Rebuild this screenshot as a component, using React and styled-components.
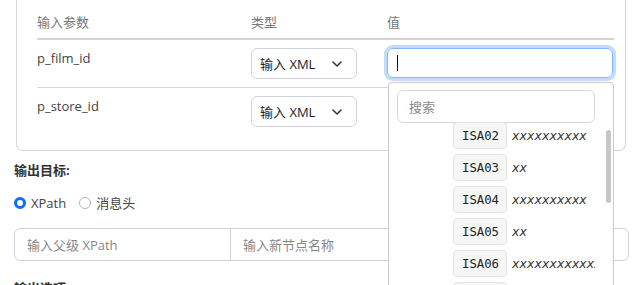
import React from "react";
import styled, { createGlobalStyle } from "styled-components";

const Global = createGlobalStyle`
  html, body { margin: 0; padding: 0; background: #fff; overflow: hidden; }
  body {
    font-family: "Open Sans", "Noto Sans CJK SC", sans-serif;
    font-size: 13px;
    color: #444;
  }
  * { box-sizing: border-box; }
`;

const Page = styled.div`
  width: 629px;
  padding-left: 14px;
`;

const Card = styled.div`
  margin: 0 3px 0 2px;
  border: 1px solid #d6d6d6;
  border-top: none;
  border-radius: 0 0 7px 7px;
  padding: 0 11px 15px 20px;
`;

const Table = styled.div`
  display: grid;
  grid-template-columns: 214px 136px 227px;
`;

const HeadCell = styled.div`
  padding: 12px 0 6px;
  line-height: 20px;
  color: #777;
  border-bottom: 2px solid #d4d4d4;
`;

const Cell = styled.div`
  position: relative;
  padding: 8px 0;
  line-height: 20px;
  color: #444;
  border-bottom: ${(p) => (p.$last ? "none" : "1px solid #d9d9d9")};
`;

const Select = styled.div`
  width: 106px;
  height: 31px;
  border: 1px solid #cfd4da;
  border-radius: 6px;
  display: flex;
  align-items: center;
  justify-content: space-between;
  padding: 0 14px 0 8px;
  color: #222;
`;

const ValueBox = styled.div`
  width: 226px;
  height: 30px;
  border: 1px solid #86b7fe;
  border-radius: 6px;
  box-shadow: 0 0 0 3px rgba(13, 110, 253, 0.25);
  display: flex;
  align-items: center;
  padding-left: 9px;
`;

const Caret = styled.span`
  width: 1px;
  height: 16px;
  background: #111;
`;

const Dropdown = styled.div`
  position: absolute;
  z-index: 5;
  top: 42px;
  left: 1px;
  width: 226px;
  height: 230px;
  background: #fff;
  border: 1px solid #cbcbcb;
  border-radius: 4px;
  padding: 7px 18px 0 8px;
  overflow: hidden;
`;

const Search = styled.div`
  height: 33px;
  border: 1px solid #d3d7dd;
  border-radius: 6px;
  display: flex;
  align-items: center;
  padding-left: 11px;
  color: #8a8a8a;
`;

const List = styled.div`
  display: flex;
  flex-direction: column;
  gap: 5px;
  padding-left: 56px;
  margin-top: -1px;
`;

const Item = styled.div`
  display: flex;
  align-items: center;
  gap: 5px;
  height: 27px;
  white-space: nowrap;
`;

const Code = styled.span`
  height: 27px;
  display: flex;
  align-items: center;
  padding: 0 7px 0 8px;
  background: #f6f6f6;
  border: 1px solid #e3e3e3;
  border-radius: 4px;
  font-family: "DejaVu Sans Mono", monospace;
  font-size: 12.3px;
  color: #222;
`;

const Desc = styled.em`
  display: inline-block;
  max-width: 92px;
  overflow: hidden;
  font-family: "DejaVu Sans Mono", monospace;
  font-style: italic;
  font-size: 12.6px;
  color: #333;
  letter-spacing: -0.1px;
`;

const Scroll = styled.div`
  position: absolute;
  right: 2px;
  top: 47px;
  width: 5px;
  height: 73px;
  border-radius: 3px;
  background: #c6c6c6;
`;

const Title = styled.div`
  margin-top: ${(p) => p.$mt}px;
  line-height: 20px;
  font-weight: 700;
  color: #333;
`;

const RadioRow = styled.div`
  margin-top: 13px;
  display: flex;
  align-items: center;
  line-height: 20px;
  gap: 13px;
`;

const RadioLabel = styled.label`
  display: flex;
  align-items: center;
  gap: 5px;
  color: #444;
`;

const Dot = styled.span`
  width: 12px;
  height: 12px;
  border-radius: 50%;
  border: ${(p) => (p.$on ? "3.5px solid #0d6efd" : "1px solid #b5b5b5")};
  background: #fff;
`;

const Group = styled.div`
  margin-top: 15px;
  display: flex;
  height: 33px;
  border: 1px solid #cfd4da;
  border-radius: 6px;
`;

const GroupInput = styled.div`
  width: ${(p) => p.$w};
  flex: ${(p) => (p.$grow ? 1 : "none")};
  display: flex;
  align-items: center;
  padding-left: 12px;
  color: #888;
  border-left: ${(p) => (p.$sep ? "1px solid #cfd4da" : "none")};
`;

const Chevron = () => (
  <svg width="10" height="6" viewBox="0 0 10 6">
    <path d="M1 1l4 4 4-4" fill="none" stroke="#333" strokeWidth="1.5" strokeLinecap="round" strokeLinejoin="round" />
  </svg>
);

const items = [
  ["ISA02", "xxxxxxxxxx"],
  ["ISA03", "xx"],
  ["ISA04", "xxxxxxxxxx"],
  ["ISA05", "xx"],
  ["ISA06", "xxxxxxxxxxxxx."],
  ["ISA07", "xx"],
];

export default function App() {
  return (
    <Page>
      <Global />
      <Card>
        <Table>
          <HeadCell>输入参数</HeadCell>
          <HeadCell>类型</HeadCell>
          <HeadCell>值</HeadCell>

          <Cell>p_film_id</Cell>
          <Cell>
            <Select>
              <span>输入 XML</span>
              <Chevron />
            </Select>
          </Cell>
          <Cell>
            <ValueBox>
              <Caret />
            </ValueBox>
            <Dropdown>
              <Search>搜索</Search>
              <List>
                {items.map(([c, d]) => (
                  <Item key={c}>
                    <Code>{c}</Code>
                    <Desc>{d}</Desc>
                  </Item>
                ))}
              </List>
              <Scroll />
            </Dropdown>
          </Cell>

          <Cell $last>p_store_id</Cell>
          <Cell $last>
            <Select>
              <span>输入 XML</span>
              <Chevron />
            </Select>
          </Cell>
          <Cell $last />
        </Table>
      </Card>
      <Title $mt={9}>输出目标:</Title>
      <RadioRow>
        <RadioLabel>
          <Dot $on />
          XPath
        </RadioLabel>
        <RadioLabel>
          <Dot />
          消息头
        </RadioLabel>
      </RadioRow>
      <Group>
        <GroupInput $w="215px">输入父级 XPath</GroupInput>
        <GroupInput $grow $sep>输入新节点名称</GroupInput>
      </Group>
      <Title $mt={17}>输出选项</Title>
    </Page>
  );
}
